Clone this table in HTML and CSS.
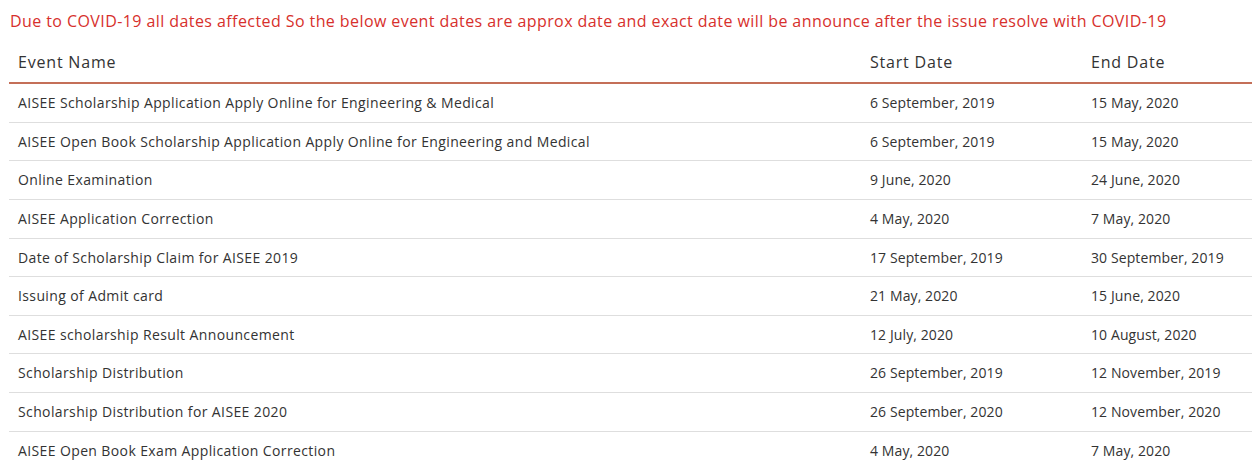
FILE: index.html
```html
<!DOCTYPE html>
<html lang="en">
<head>
<meta charset="utf-8">
<title>AISEE Dates</title>
<link rel="stylesheet" href="styles.css">
</head>
<body>
<p class="note">Due to COVID-19 all dates affected So the below event dates are approx date and exact date will be announce after the issue resolve with COVID-19</p>
<table class="dates">
  <colgroup>
    <col class="c-name">
    <col class="c-start">
    <col class="c-end">
  </colgroup>
  <thead>
    <tr><th>Event Name</th><th>Start Date</th><th>End Date</th></tr>
  </thead>
  <tbody>
    <tr><td>AISEE Scholarship Application Apply Online for Engineering &amp; Medical</td><td class="d">6 September, 2019</td><td class="d">15 May, 2020</td></tr>
    <tr><td>AISEE Open Book Scholarship Application Apply Online for Engineering and Medical</td><td class="d">6 September, 2019</td><td class="d">15 May, 2020</td></tr>
    <tr><td>Online Examination</td><td class="d">9 June, 2020</td><td class="d">24 June, 2020</td></tr>
    <tr><td>AISEE Application Correction</td><td class="d">4 May, 2020</td><td class="d">7 May, 2020</td></tr>
    <tr><td>Date of Scholarship Claim for AISEE 2019</td><td class="d">17 September, 2019</td><td class="d">30 September, 2019</td></tr>
    <tr><td>Issuing of Admit card</td><td class="d">21 May, 2020</td><td class="d">15 June, 2020</td></tr>
    <tr><td>AISEE scholarship Result Announcement</td><td class="d">12 July, 2020</td><td class="d">10 August, 2020</td></tr>
    <tr><td>Scholarship Distribution</td><td class="d">26 September, 2019</td><td class="d">12 November, 2019</td></tr>
    <tr><td>Scholarship Distribution for AISEE 2020</td><td class="d">26 September, 2020</td><td class="d">12 November, 2020</td></tr>
    <tr class="last"><td>AISEE Open Book Exam Application Correction</td><td class="d">4 May, 2020</td><td class="d">7 May, 2020</td></tr>
  </tbody>
</table>
</body>
</html>
```
FILE: styles.css
```css
html, body {
  margin: 0;
  padding: 0;
  background: #fff;
}
body {
  font-family: "Open Sans", "Liberation Sans", sans-serif;
  color: #333;
  overflow: hidden;
}
.note {
  margin: 0;
  padding: 10px 0 10px 10px;
  font-size: 16px;
  line-height: 22px;
  letter-spacing: 0.42px;
  color: #d7302c;
  white-space: nowrap;
}
.dates {
  margin-left: 9px;
  width: 1243px;
  border-collapse: collapse;
  table-layout: fixed;
}
.c-name { width: 852px; }
.c-start { width: 221px; }
.c-end { width: 170px; }
.dates th {
  text-align: left;
  font-weight: normal;
  font-size: 16px;
  line-height: 20px;
  letter-spacing: 0.8px;
  padding: 10px 9px;
  color: #333;
  border-bottom: 2px solid #c46f58;
}
.dates td {
  font-size: 14px;
  line-height: 19.625px;
  letter-spacing: 0.38px;
  padding: 9px 9px;
  color: #333;
  border-bottom: 1px solid #dedede;
  white-space: nowrap;
}
.dates td.d {
  letter-spacing: 0.1px;
}
.dates tr.last td {
  border-bottom: none;
}
```
